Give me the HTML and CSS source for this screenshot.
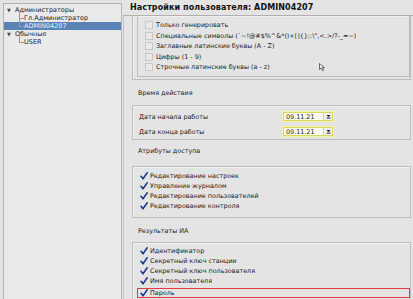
FILE: index.html
```html
<!DOCTYPE html>
<html lang="ru">
<head>
<meta charset="utf-8">
<title>Настройки пользователя</title>
<link rel="stylesheet" href="styles.css">
</head>
<body>
<div class="app">
  <div class="tree">
    <div class="node root"><span class="tri">▼</span>Администраторы</div>
    <div class="node child">Гл.Администратор</div>
    <div class="node child selected">ADMIN04207</div>
    <div class="node root"><span class="tri">▼</span>Обычные</div>
    <div class="node child">USER</div>
  </div>
  <div class="main">
    <div class="title">Настройки пользователя: ADMIN04207</div>
    <div class="frame">
      <div class="box box-gen">
        <div class="genbox">
          <div class="row"><span class="cb"></span>Только генерировать</div>
          <div class="row"><span class="cb"></span>Специальные символы (`~!@#$%^&amp;*()+[]{};:\",&lt;.&gt;/?-_=~)</div>
          <div class="row"><span class="cb"></span>Заглавные латинские буквы (A - Z)</div>
          <div class="row"><span class="cb"></span>Цифры (1 - 9)</div>
          <div class="row"><span class="cb"></span>Строчные латинские буквы (a - z)</div>
          <svg class="cursor" width="9" height="10" viewBox="0 0 9 10"><path d="M1.5 1.5 L1.5 7.5 L3 6 L4.5 8.8 L5.6 8.2 L4.3 5.6 L6.5 5.6 Z" fill="#f4f4f4" stroke="#333" stroke-width="0.7" stroke-linejoin="round"/></svg>
        </div>
      </div>
      <div class="label l1">Время действия</div>
      <div class="box box-dates">
        <div class="drow">
          <span class="dlabel">Дата начала работы</span>
          <span class="date"><span class="dval">09.11.21</span><span class="dbtn"><svg width="5" height="5" viewBox="0 0 5 5"><path d="M0.5 1 L4.5 1 L2.5 3 Z" fill="#111"/><rect x="0.5" y="3.6" width="4" height="0.9" fill="#111"/></svg></span></span>
        </div>
        <div class="drow">
          <span class="dlabel">Дата конца работы</span>
          <span class="date"><span class="dval">09.11.21</span><span class="dbtn"><svg width="5" height="5" viewBox="0 0 5 5"><path d="M0.5 1 L4.5 1 L2.5 3 Z" fill="#111"/><rect x="0.5" y="3.6" width="4" height="0.9" fill="#111"/></svg></span></span>
        </div>
      </div>
      <div class="label l2">Атрибуты доступа</div>
      <div class="box box-list">
        <div class="row"><svg class="chk" width="8" height="8" viewBox="0 0 8 8"><path d="M1 4.3 L3 6.8 L7.2 0.8" fill="none" stroke="#1d3f8c" stroke-width="1.6" stroke-linejoin="round" stroke-linecap="round"/></svg>Редактирование настроек</div>
        <div class="row"><svg class="chk" width="8" height="8" viewBox="0 0 8 8"><path d="M1 4.3 L3 6.8 L7.2 0.8" fill="none" stroke="#1d3f8c" stroke-width="1.6" stroke-linejoin="round" stroke-linecap="round"/></svg>Управление журналом</div>
        <div class="row"><svg class="chk" width="8" height="8" viewBox="0 0 8 8"><path d="M1 4.3 L3 6.8 L7.2 0.8" fill="none" stroke="#1d3f8c" stroke-width="1.6" stroke-linejoin="round" stroke-linecap="round"/></svg>Редактирование пользователей</div>
        <div class="row"><svg class="chk" width="8" height="8" viewBox="0 0 8 8"><path d="M1 4.3 L3 6.8 L7.2 0.8" fill="none" stroke="#1d3f8c" stroke-width="1.6" stroke-linejoin="round" stroke-linecap="round"/></svg>Редактирование контроля</div>
      </div>
      <div class="label l3">Результаты ИА</div>
      <div class="box box-list last">
        <div class="row"><svg class="chk" width="8" height="8" viewBox="0 0 8 8"><path d="M1 4.3 L3 6.8 L7.2 0.8" fill="none" stroke="#1d3f8c" stroke-width="1.6" stroke-linejoin="round" stroke-linecap="round"/></svg>Идентификатор</div>
        <div class="row"><svg class="chk" width="8" height="8" viewBox="0 0 8 8"><path d="M1 4.3 L3 6.8 L7.2 0.8" fill="none" stroke="#1d3f8c" stroke-width="1.6" stroke-linejoin="round" stroke-linecap="round"/></svg>Секретный ключ станции</div>
        <div class="row"><svg class="chk" width="8" height="8" viewBox="0 0 8 8"><path d="M1 4.3 L3 6.8 L7.2 0.8" fill="none" stroke="#1d3f8c" stroke-width="1.6" stroke-linejoin="round" stroke-linecap="round"/></svg>Секретный ключ пользователя</div>
        <div class="row"><svg class="chk" width="8" height="8" viewBox="0 0 8 8"><path d="M1 4.3 L3 6.8 L7.2 0.8" fill="none" stroke="#1d3f8c" stroke-width="1.6" stroke-linejoin="round" stroke-linecap="round"/></svg>Имя пользователя</div>
        <div class="row hl"><svg class="chk" width="8" height="8" viewBox="0 0 8 8"><path d="M1 4.3 L3 6.8 L7.2 0.8" fill="none" stroke="#1d3f8c" stroke-width="1.6" stroke-linejoin="round" stroke-linecap="round"/></svg>Пароль</div>
      </div>
    </div>
  </div>
</div>
</body>
</html>
```
FILE: styles.css
```css
html, body {
  margin: 0;
  padding: 0;
  background: #e4e4e4;
  font-family: "DejaVu Sans", "Liberation Sans", sans-serif;
  color: #222;
  overflow: hidden;
}
.app {
  display: flex;
  height: 299px;
  width: 413px;
}
.tree {
  width: 117px;
  flex: none;
  margin: 3px 0 0 3px;
  border: 1px solid #b4b4b4;
  border-bottom: none;
  background: #eaeaea;
  padding-top: 2px;
  font-size: 6.5px;
}
.node {
  height: 8px;
  line-height: 8px;
  position: relative;
  white-space: nowrap;
}
.root { padding-left: 3px; }
.tri {
  display: inline-block;
  width: 8px;
  font-size: 5px;
  color: #444;
}
.child { padding-left: 20px; }
.child::before {
  content: "";
  position: absolute;
  left: 15px;
  top: -4px;
  width: 4px;
  height: 8px;
  border-left: 1px solid #999;
  border-bottom: 1px solid #999;
}
.selected {
  background: #5b84b6;
  color: #e8eef8;
}
.main {
  flex: 1;
  display: flex;
  flex-direction: column;
  margin-left: 1px;
  min-width: 0;
}
.title {
  height: 15px;
  line-height: 16px;
  font-size: 8px;
  font-weight: bold;
  padding-left: 7px;
  color: #111;
  letter-spacing: 0.1px;
  white-space: nowrap;
}
.frame {
  flex: 1;
  border-top: 1px solid #b0b0b0;
  border-left: 1px solid #c4c4c4;
  padding: 0 2px 0 8px;
  overflow: hidden;
  font-size: 6.4px;
}
.box {
  border: 1px solid #bdbdbd;
  box-shadow: inset 1px 1px 0 #f0f0f0;
}
.box-gen {
  border-top: none;
  height: 63px;
  padding: 0 0 0 4px;
  box-sizing: content-box;
}
.genbox {
  position: relative;
  height: 61px;
  border: 1px solid #bdbdbd;
  border-top: none;
  padding: 4px 0 0 7px;
  box-sizing: border-box;
}
.row {
  height: 10px;
  display: flex;
  align-items: center;
  white-space: nowrap;
}
.genbox .row { height: 10.5px; }
.cb {
  width: 6px;
  height: 6px;
  border: 1px solid #c8c8c8;
  background: #e9e9e9;
  margin-right: 3px;
  flex: none;
}
.cursor {
  position: absolute;
  left: 180px;
  top: 46px;
}
.label {
  padding-left: 6px;
}
.l1 { height: 25px; line-height: 26px; }
.l2 { height: 26px; line-height: 22px; }
.l3 { height: 24px; line-height: 27px; }
.box-dates {
  height: 35px;
  padding: 3px 0 0 6px;
  box-sizing: border-box;
}
.drow {
  height: 15px;
  display: flex;
  align-items: center;
}
.dlabel { width: 144px; }
.date {
  display: flex;
  width: 50px;
  height: 9px;
  border: 1px solid #d8d860;
  box-shadow: 0 0 0 1px #f4f4a8;
  background: #fbfbf0;
  box-sizing: border-box;
}
.dval {
  flex: 1;
  line-height: 8px;
  padding-left: 2px;
}
.dbtn {
  width: 8px;
  display: flex;
  align-items: center;
  justify-content: center;
  background: #f0f0f0;
  border-left: 1px solid #ccc;
}
.box-list {
  height: 52px;
  padding: 4px 0 0 7px;
  box-sizing: border-box;
}
.box-list.last {
  height: 80px;
  padding-top: 3px;
}
.chk {
  margin-right: 2px;
  flex: none;
}
.row.hl {
  margin: 2px 0 0 -3px;
  padding-left: 2px;
  height: 10px;
  border: 1px solid #e03a3a;
  box-sizing: border-box;
}
```
